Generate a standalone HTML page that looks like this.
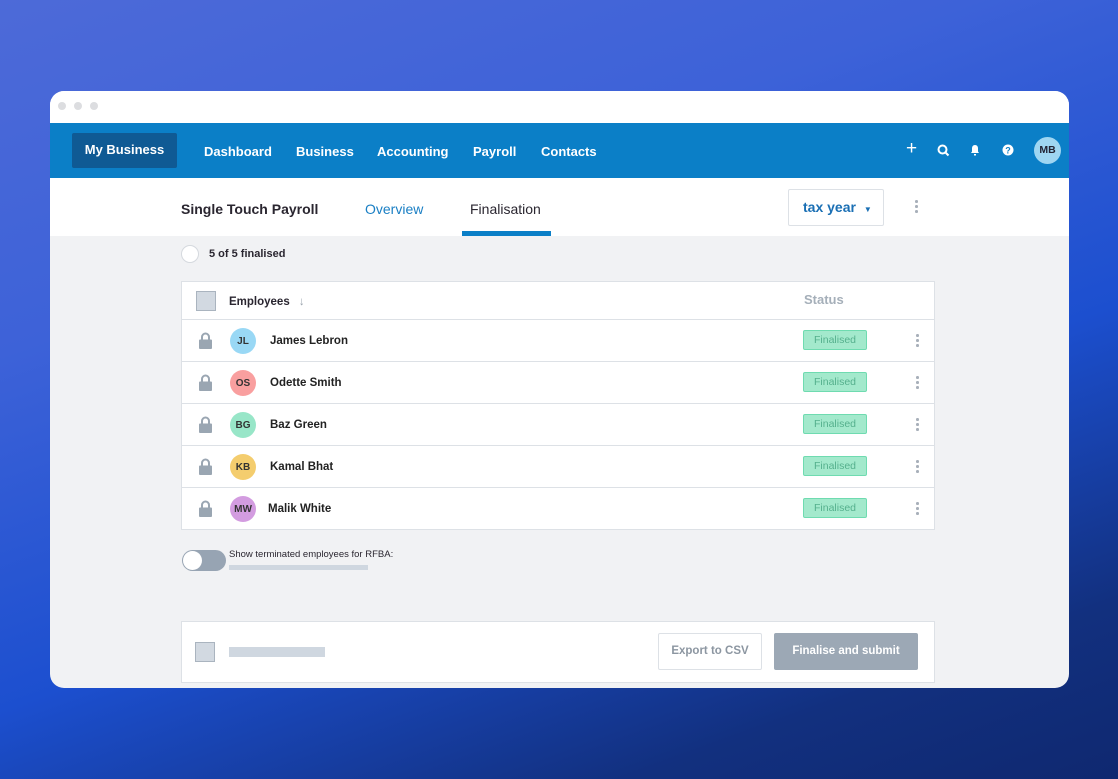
<!DOCTYPE html>
<html><head><meta charset="utf-8"><style>
*{box-sizing:border-box;margin:0;padding:0}
body{width:1118px;height:779px;overflow:hidden;font-family:"Liberation Sans",sans-serif;background:linear-gradient(160deg,#4d6ad8 0%,#3d62d8 30%,#1c4fcf 60%,#12307f 85%,#0f2870 100%);position:relative}
.win{position:absolute;left:50px;top:91px;width:1019px;height:597px;border-radius:14px;overflow:hidden;background:#f1f2f4}
.top{height:32px;background:#fff;position:relative}
.dot{position:absolute;top:11px;width:8px;height:8px;border-radius:50%;background:#dcdde0}
.nav{height:55px;background:#0b7fc7;position:relative;color:#fff;font-weight:bold;font-size:13px}
.nav span{position:absolute;top:21px}
.mb{position:absolute;left:22px;top:10px;width:105px;height:35px;background:#0f5a94;border-radius:2px;text-align:center;line-height:34px}
.sub{height:58px;background:#fff;position:relative}
.a{position:absolute}
.tbl{position:absolute;left:131px;top:190px;width:754px;height:249px;background:#fff;border:1px solid #dde1e6}
.row{position:absolute;left:0;width:752px;height:42px;border-top:1px solid #dde1e6}
.lock{position:absolute;left:17px;top:12px;width:13px;height:17px}
.av{position:absolute;left:48px;top:8px;width:26px;height:26px;border-radius:50%;font-size:10px;text-align:center;line-height:28px;color:#333;font-weight:bold}
.nm{position:absolute;left:88px;top:15px;font-size:11.5px;font-weight:bold;color:#222}
.badge{position:absolute;left:621px;top:10px;width:64px;height:20px;background:#a3e9cc;border:1px solid #6fdbb0;border-radius:2px;color:#55b08d;font-size:10.5px;text-align:center;line-height:18px}
.kb{position:absolute;left:734px;top:14px;width:3px}
.kb i{display:block;width:2.5px;height:2.5px;border-radius:50%;background:#a8b0ba;margin-bottom:2.5px}
</style></head><body>
<div class="win">
<div class="top"><div class="dot" style="left:8px"></div><div class="dot" style="left:24px"></div><div class="dot" style="left:40px"></div></div>
<div class="nav">
<div class="mb">My Business</div>
<span style="left:154px">Dashboard</span><span style="left:246px">Business</span><span style="left:327px">Accounting</span><span style="left:423px">Payroll</span><span style="left:491px">Contacts</span>
<span style="left:856px;top:15px;font-size:19px;font-weight:normal">+</span>
<svg class="a" style="left:887px;top:21px" width="13" height="13" viewBox="0 0 13 13"><circle cx="5.5" cy="5.5" r="4" fill="none" stroke="#fff" stroke-width="2"/><path d="M8.5 8.5l3 3" stroke="#fff" stroke-width="2"/></svg>
<svg class="a" style="left:920px;top:21px" width="10" height="12" viewBox="0 0 10 12"><path d="M5 1c-2 0-3 1.5-3 3.5v3L1 9h8L8 7.5v-3C8 2.5 7 1 5 1z M4 10h2v1.5H4z" fill="#fff"/></svg>
<svg class="a" style="left:952px;top:21px" width="12" height="12" viewBox="0 0 12 12"><circle cx="6" cy="6" r="5.5" fill="#fff"/><text x="6" y="9.3" font-size="9" font-weight="bold" text-anchor="middle" fill="#0b7fc7" font-family="Liberation Sans">?</text></svg>
<div class="a" style="left:984px;top:14px;width:27px;height:27px;border-radius:50%;background:#9fd6f2;color:#223;font-size:10.5px;text-align:center;line-height:27px">MB</div>
</div>
<div class="sub">
<div class="a" style="left:131px;top:23px;font-size:14px;font-weight:bold;color:#2a2630">Single Touch Payroll</div>
<div class="a" style="left:315px;top:23px;font-size:14px;color:#1a7fc4">Overview</div>
<div class="a" style="left:420px;top:23px;font-size:14px;color:#2a2630">Finalisation</div>
<div class="a" style="left:412px;top:53px;width:89px;height:5px;background:#0b7fc7"></div>
<div class="a" style="left:738px;top:11px;width:96px;height:37px;border:1px solid #dde1e6;border-radius:2px;color:#1a6fb4;font-weight:bold;font-size:14px;padding:9px 0 0 14px">tax year <span style="font-size:8px;margin-left:4px">▼</span></div>
<div class="a" style="left:865px;top:22px"><div class="kb" style="left:0;top:0;position:static"><i></i><i></i><i></i></div></div>
</div>
<div class="a" style="left:131px;top:154px;width:18px;height:18px;border-radius:50%;background:#fff;border:1px solid #d5d9de"></div>
<div class="a" style="left:159px;top:157px;font-size:11px;font-weight:bold;color:#2a2630">5 of 5 finalised</div>
<div class="tbl">
<div class="a" style="left:14px;top:9px;width:20px;height:20px;background:#d2d9e1;border:1px solid #aab4bf"></div>
<div class="a" style="left:47px;top:14px;font-size:11.5px;font-weight:bold;color:#2a2630">Employees <span style="color:#9aa3ad;font-weight:normal;margin-left:6px">↓</span></div>
<div class="a" style="left:622px;top:10px;font-size:13px;font-weight:bold;color:#a5afb9">Status</div>
<div class="row" style="top:37px"><svg class="lock" viewBox="0 0 13 17"><path d="M3 8V5a3.5 3.5 0 017 0v3" fill="none" stroke="#9aa6b2" stroke-width="2"/><rect x="0" y="7.5" width="13" height="9.5" rx="1" fill="#9aa6b2"/></svg><div class="av" style="background:#99d8f5">JL</div><div class="nm">James Lebron</div><div class="badge">Finalised</div><div class="kb"><i></i><i></i><i></i></div></div>
<div class="row" style="top:79px"><svg class="lock" viewBox="0 0 13 17"><path d="M3 8V5a3.5 3.5 0 017 0v3" fill="none" stroke="#9aa6b2" stroke-width="2"/><rect x="0" y="7.5" width="13" height="9.5" rx="1" fill="#9aa6b2"/></svg><div class="av" style="background:#f99f9f">OS</div><div class="nm">Odette Smith</div><div class="badge">Finalised</div><div class="kb"><i></i><i></i><i></i></div></div>
<div class="row" style="top:121px"><svg class="lock" viewBox="0 0 13 17"><path d="M3 8V5a3.5 3.5 0 017 0v3" fill="none" stroke="#9aa6b2" stroke-width="2"/><rect x="0" y="7.5" width="13" height="9.5" rx="1" fill="#9aa6b2"/></svg><div class="av" style="background:#98e6c8">BG</div><div class="nm">Baz Green</div><div class="badge">Finalised</div><div class="kb"><i></i><i></i><i></i></div></div>
<div class="row" style="top:163px"><svg class="lock" viewBox="0 0 13 17"><path d="M3 8V5a3.5 3.5 0 017 0v3" fill="none" stroke="#9aa6b2" stroke-width="2"/><rect x="0" y="7.5" width="13" height="9.5" rx="1" fill="#9aa6b2"/></svg><div class="av" style="background:#f4cd6e">KB</div><div class="nm">Kamal Bhat</div><div class="badge">Finalised</div><div class="kb"><i></i><i></i><i></i></div></div>
<div class="row" style="top:205px"><svg class="lock" viewBox="0 0 13 17"><path d="M3 8V5a3.5 3.5 0 017 0v3" fill="none" stroke="#9aa6b2" stroke-width="2"/><rect x="0" y="7.5" width="13" height="9.5" rx="1" fill="#9aa6b2"/></svg><div class="av" style="background:#d39ce0">MW</div><div class="nm" style="left:86px">Malik White</div><div class="badge">Finalised</div><div class="kb"><i></i><i></i><i></i></div></div>
</div>
<div class="a" style="left:132px;top:459px;width:44px;height:21px;border-radius:11px;background:#97a4b3"></div>
<div class="a" style="left:133px;top:460px;width:19px;height:19px;border-radius:50%;background:#fff"></div>
<div class="a" style="left:179px;top:458px;font-size:9.5px;color:#2a2630">Show terminated employees for RFBA:</div>
<div class="a" style="left:179px;top:474px;width:139px;height:5px;background:#cfd7e0"></div>
<div class="a" style="left:131px;top:530px;width:754px;height:62px;background:#fff;border:1px solid #dde1e6">
<div class="a" style="left:13px;top:20px;width:20px;height:20px;background:#d2d9e1;border:1px solid #aab4bf"></div>
<div class="a" style="left:47px;top:25px;width:96px;height:10px;background:#cfd7e0"></div>
<div class="a" style="left:476px;top:11px;width:104px;height:37px;border:1px solid #dde1e6;border-radius:2px;color:#8c96a1;font-size:11.5px;font-weight:bold;text-align:center;line-height:35px">Export to CSV</div>
<div class="a" style="left:592px;top:11px;width:144px;height:37px;background:#9ca8b5;border-radius:2px;color:#fff;font-size:11.5px;font-weight:bold;text-align:center;line-height:37px">Finalise and submit</div>
</div>
</div>
</body></html>
